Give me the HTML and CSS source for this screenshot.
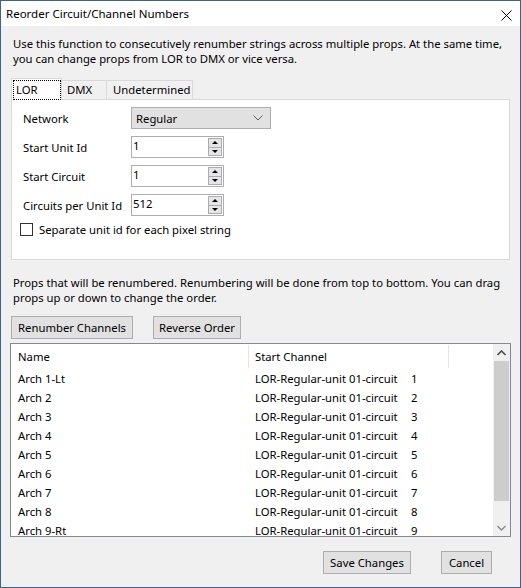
FILE: index.html
```html
<!DOCTYPE html>
<html>
<head>
<meta charset="utf-8">
<title>Reorder Circuit/Channel Numbers</title>
<link rel="stylesheet" href="styles.css">
</head>
<body>
<div class="window">
  <div class="titlebar">
    <span class="title">Reorder Circuit/Channel Numbers</span>
    <svg class="close" width="11" height="11" viewBox="0 0 11 11"><path d="M0.5 0.5 L10.5 10.5 M10.5 0.5 L0.5 10.5" stroke="#000" stroke-width="1" fill="none"/></svg>
  </div>
  <div class="content">
    <p class="desc">Use this function to consecutively renumber strings across multiple props. At the same time,<br>you can change props from LOR to DMX or vice versa.</p>
    <div class="tabs">
      <div class="tab selected"><span class="focus">LOR</span></div>
      <div class="tab tab-dmx">DMX</div>
      <div class="tab tab-und">Undetermined</div>
    </div>
    <div class="panel">
      <div class="row">
        <span class="label">Network</span>
        <div class="select">
          <span>Regular</span>
          <svg class="chev" width="10" height="6" viewBox="0 0 10 6"><path d="M0.5 0.5 L5 5 L9.5 0.5" stroke="#606060" stroke-width="1" fill="none"/></svg>
        </div>
      </div>
      <div class="row">
        <span class="label">Start Unit Id</span>
        <div class="spin"><span class="val">1</span><div class="spinbtns"><span class="sb up"></span><span class="sb down"></span></div></div>
      </div>
      <div class="row">
        <span class="label">Start Circuit</span>
        <div class="spin"><span class="val">1</span><div class="spinbtns"><span class="sb up"></span><span class="sb down"></span></div></div>
      </div>
      <div class="row">
        <span class="label">Circuits per Unit Id</span>
        <div class="spin"><span class="val">512</span><div class="spinbtns"><span class="sb up"></span><span class="sb down"></span></div></div>
      </div>
      <div class="check"><span class="box"></span><span>Separate unit id for each pixel string</span></div>
    </div>
    <p class="desc props">Props that will be renumbered. Renumbering will be done from top to bottom. You can drag<br>props up or down to change the order.</p>
    <div class="actions">
      <button class="btn btn-renumber">Renumber Channels</button>
      <button class="btn btn-reverse">Reverse Order</button>
    </div>
    <div class="list">
      <div class="listmain">
        <div class="lhead">
          <div class="c1">Name</div>
          <div class="c2">Start Channel</div>
          <div class="c3"></div>
        </div>
        <div class="lrow"><div class="c1">Arch 1-Lt</div><div class="c2"><span class="ch">LOR-Regular-unit 01-circuit</span><span>1</span></div></div>
        <div class="lrow"><div class="c1">Arch 2</div><div class="c2"><span class="ch">LOR-Regular-unit 01-circuit</span><span>2</span></div></div>
        <div class="lrow"><div class="c1">Arch 3</div><div class="c2"><span class="ch">LOR-Regular-unit 01-circuit</span><span>3</span></div></div>
        <div class="lrow"><div class="c1">Arch 4</div><div class="c2"><span class="ch">LOR-Regular-unit 01-circuit</span><span>4</span></div></div>
        <div class="lrow"><div class="c1">Arch 5</div><div class="c2"><span class="ch">LOR-Regular-unit 01-circuit</span><span>5</span></div></div>
        <div class="lrow"><div class="c1">Arch 6</div><div class="c2"><span class="ch">LOR-Regular-unit 01-circuit</span><span>6</span></div></div>
        <div class="lrow"><div class="c1">Arch 7</div><div class="c2"><span class="ch">LOR-Regular-unit 01-circuit</span><span>7</span></div></div>
        <div class="lrow"><div class="c1">Arch 8</div><div class="c2"><span class="ch">LOR-Regular-unit 01-circuit</span><span>8</span></div></div>
        <div class="lrow"><div class="c1">Arch 9-Rt</div><div class="c2"><span class="ch">LOR-Regular-unit 01-circuit</span><span>9</span></div></div>
      </div>
      <div class="scrollbar">
        <div class="sarrow"><svg width="9" height="6" viewBox="0 0 9 6"><path d="M0.5 5 L4.5 1 L8.5 5" stroke="#505050" stroke-width="1.6" fill="none"/></svg></div>
        <div class="thumb"></div>
        <div class="track"></div>
        <div class="sarrow"><svg width="9" height="6" viewBox="0 0 9 6"><path d="M0.5 1 L4.5 5 L8.5 1" stroke="#8a8a8a" stroke-width="1.4" fill="none"/></svg></div>
      </div>
    </div>
    <div class="footer">
      <button class="btn btn-save">Save Changes</button>
      <button class="btn btn-cancel">Cancel</button>
    </div>
  </div>
</div>
</body>
</html>
```

FILE: styles.css
```css
* { box-sizing: border-box; }
html, body { margin: 0; padding: 0; }
body {
  width: 521px;
  height: 588px;
  overflow: hidden;
  font-family: "Noto Sans", "DejaVu Sans", sans-serif;
  font-size: 11.3px;
  color: #000;
}
.window {
  width: 521px;
  height: 588px;
  border: 1px solid #3c6290;
  background: #f0f0f0;
  display: flex;
  flex-direction: column;
}
.titlebar {
  height: 25px;
  flex: none;
  background: #fff;
  display: flex;
  align-items: center;
  padding-left: 5px;
}
.title { font-size: 11.5px; line-height: 14px; }
.close { margin-left: auto; margin-right: 8px; margin-top: 3px; }
.content {
  flex: 1;
  padding: 10px 10px 0 10px;
  display: flex;
  flex-direction: column;
}
.desc {
  margin: 0;
  padding-left: 2px;
  line-height: 15px;
  white-space: nowrap;
}
.tabs {
  margin-top: 12px;
  height: 21px;
  display: flex;
  align-items: flex-end;
  position: relative;
  z-index: 1;
}
.tab {
  height: 19px;
  line-height: 17px;
  border: 1px solid #d9d9d9;
  border-bottom: none;
  border-left: none;
  background: #f0f0f0;
  padding-left: 4px;
}
.tab.selected {
  height: 22px;
  margin-bottom: -1px;
  width: 51px;
  border-left: 1px solid #d9d9d9;
  background: #fff;
  padding: 1px 0 0 1px;
}
.focus {
  display: block;
  width: 48px;
  height: 20px;
  line-height: 17px;
  border: 1px dotted #000;
  padding-left: 2px;
}
.tab-dmx { width: 45px; padding-left: 5px; }
.tab-und { width: 86px; padding-left: 6px; }
.panel {
  height: 161px;
  border: 1px solid #d9d9d9;
  background: #fff;
  padding: 7px 0 0 11px;
}
.row {
  display: flex;
  align-items: center;
  height: 22px;
  margin-bottom: 7px;
}
.label { width: 108px; flex: none; }
.select {
  width: 140px;
  height: 22px;
  border: 1px solid #adadad;
  background: #e1e1e1;
  display: flex;
  align-items: center;
  padding-left: 4px;
}
.chev { margin-left: auto; margin-right: 7px; }
.spin {
  width: 93px;
  height: 22px;
  border: 1px solid #abadb3;
  background: #fff;
  display: flex;
  align-items: center;
  padding-left: 1px;
}
.val { line-height: 16px; margin-top: -2px; }
.spinbtns {
  margin-left: auto;
  margin-right: 1px;
  width: 14px;
  height: 18px;
  display: flex;
  flex-direction: column;
}
.sb {
  flex: 1;
  border: 1px solid #acacac;
  background: #e5e5e5;
  position: relative;
}
.sb.down { border-top: none; }
.sb::after {
  content: "";
  position: absolute;
  left: 3px;
  top: 2px;
  border-left: 3px solid transparent;
  border-right: 3px solid transparent;
}
.sb.up::after { border-bottom: 3px solid #000; }
.sb.down::after { border-top: 3px solid #000; top: 2px; }
.check {
  display: flex;
  align-items: center;
  margin-top: 3px;
  margin-left: -3px;
  height: 13px;
}
.box {
  width: 13px;
  height: 13px;
  border: 1px solid #333;
  background: #fff;
  margin-right: 6px;
  flex: none;
}
.props { margin-top: 15px; }
.actions {
  margin-top: 11px;
  display: flex;
  gap: 20px;
}
.btn {
  height: 23px;
  border: 1px solid #adadad;
  background: #e1e1e1;
  font-family: inherit;
  font-size: 11.3px;
  color: #000;
  padding: 0;
  margin: 0;
}
.btn-renumber { width: 122px; }
.btn-reverse { width: 88px; }
.list {
  margin-top: 4px;
  margin-left: -1px;
  width: 501px;
  height: 194px;
  border: 1px solid #828790;
  background: #fff;
  display: flex;
  overflow: hidden;
}
.listmain { flex: 1; overflow: hidden; }
.lhead {
  height: 25px;
  display: flex;
  align-items: center;
}
.lhead > div {
  height: 23px;
  line-height: 23px;
  border-right: 1px solid #e5e5e5;
}
.c1 { width: 238px; padding-left: 7px; flex: none; }
.c2 { width: 200px; padding-left: 6px; flex: none; }
.c3 { width: 46px; flex: none; }
.lhead .c3 { border-right: none; }
.lrow {
  height: 19px;
  line-height: 19px;
  display: flex;
  white-space: nowrap;
}
.lrow .c2 { padding-left: 6px; }
.ch { display: inline-block; width: 156px; }
.scrollbar {
  width: 17px;
  flex: none;
  background: #f0f0f0;
  display: flex;
  flex-direction: column;
}
.sarrow {
  height: 17px;
  display: flex;
  align-items: center;
  justify-content: center;
}
.thumb { height: 140px; margin: 0 1px; background: #cdcdcd; }
.track { flex: 1; }
.footer {
  margin-top: 14px;
  display: flex;
  justify-content: flex-end;
  gap: 30px;
  padding-right: 18px;
}
.btn-save { width: 88px; }
.btn-cancel { width: 51px; }
```
